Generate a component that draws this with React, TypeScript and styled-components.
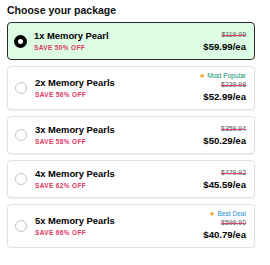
import React from "react";
import styled, { createGlobalStyle } from "styled-components";

const Global = createGlobalStyle`
  html, body { margin: 0; padding: 0; background: #ffffff; }
  body { font-family: "Liberation Sans", Arial, sans-serif; color: #111; }
`;

const Page = styled.div`
  width: 248px;
  padding: 4px 0 0 7px;
`;

const Title = styled.h2`
  margin: 0 0 5px 0;
  font-size: 10.5px;
  line-height: 13px;
  font-weight: 700;
  color: #111;
`;

const List = styled.div`
  display: flex;
  flex-direction: column;
  gap: 6px;
`;

const Card = styled.label<{ $selected: boolean }>`
  display: flex;
  align-items: center;
  gap: 7px;
  padding: 6px 8px 6px 6px;
  border-radius: 4px;
  border: 1px solid ${(p) => (p.$selected ? "#2a2a2a" : "#e2e2e6")};
  background: ${(p) => (p.$selected ? "#dcfce3" : "#ffffff")};
  box-shadow: ${(p) => (p.$selected ? "none" : "0 1px 2px rgba(0,0,0,0.07)")};
  cursor: pointer;
`;

const Radio = styled.span<{ $selected: boolean }>`
  flex: none;
  box-sizing: border-box;
  width: ${(p) => (p.$selected ? "13px" : "12px")};
  height: ${(p) => (p.$selected ? "13px" : "12px")};
  margin-left: ${(p) => (p.$selected ? "0" : "1px")};
  margin-right: ${(p) => (p.$selected ? "0" : "1px")};
  border-radius: 50%;
  border: ${(p) => (p.$selected ? "4px solid #000" : "1px solid #c4c4c8")};
  background: #fff;
`;

const Info = styled.div`
  flex: 1;
  display: flex;
  flex-direction: column;
`;

const Name = styled.div`
  font-size: 9.4px;
  line-height: 13px;
  font-weight: 700;
  color: #000;
`;

const Save = styled.div`
  font-size: 6.5px;
  line-height: 11px;
  font-weight: 700;
  letter-spacing: 0.35px;
  color: #e0365e;
`;

const Prices = styled.div`
  display: flex;
  flex-direction: column;
  align-items: flex-end;
`;

const Badge = styled.div<{ $color: string }>`
  display: flex;
  align-items: center;
  gap: 2px;
  height: 6px;
  font-size: 6.6px;
  line-height: 6px;
  color: ${(p) => p.$color};
`;

const Star = styled.span`
  color: #f59e0b;
  font-size: 6.5px;
  line-height: 6px;
`;

const OldPrice = styled.div`
  font-size: 6.9px;
  line-height: 11px;
  color: #555;
  text-decoration: line-through;
  text-decoration-color: #d9486a;
`;

const Price = styled.div`
  font-size: 9.6px;
  line-height: 13px;
  font-weight: 700;
  color: #000;
`;

type Pkg = {
  name: string;
  save: string;
  old: string;
  price: string;
  badge?: { text: string; color: string };
};

const packages: Pkg[] = [
  { name: "1x Memory Pearl", save: "SAVE 50% OFF", old: "$119.99", price: "$59.99/ea" },
  {
    name: "2x Memory Pearls",
    save: "SAVE 56% OFF",
    old: "$239.98",
    price: "$52.99/ea",
    badge: { text: "Most Popular", color: "#06946a" },
  },
  { name: "3x Memory Pearls", save: "SAVE 58% OFF", old: "$359.94", price: "$50.29/ea" },
  { name: "4x Memory Pearls", save: "SAVE 62% OFF", old: "$479.92", price: "$45.59/ea" },
  {
    name: "5x Memory Pearls",
    save: "SAVE 66% OFF",
    old: "$599.90",
    price: "$40.79/ea",
    badge: { text: "Best Deal", color: "#1a95cf" },
  },
];

export default function App() {
  const [selected, setSelected] = React.useState(0);
  return (
    <>
      <Global />
      <Page>
        <Title>Choose your package</Title>
        <List>
          {packages.map((p, i) => (
            <Card key={p.name} $selected={selected === i} onClick={() => setSelected(i)}>
              <Radio $selected={selected === i} />
              <Info>
                <Name>{p.name}</Name>
                <Save>{p.save}</Save>
              </Info>
              <Prices>
                {p.badge && (
                  <Badge $color={p.badge.color}>
                    <Star>★</Star>
                    {p.badge.text}
                  </Badge>
                )}
                <OldPrice>{p.old}</OldPrice>
                <Price>{p.price}</Price>
              </Prices>
            </Card>
          ))}
        </List>
      </Page>
    </>
  );
}
